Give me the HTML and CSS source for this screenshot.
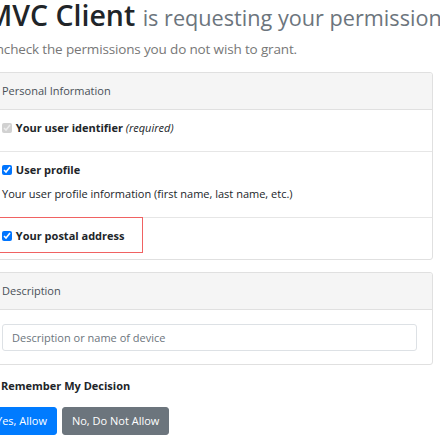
FILE: index.html
```
<!DOCTYPE html>
<html lang="en">
<head>
<meta charset="utf-8">
<title>Consent</title>
<link rel="stylesheet" href="styles.css">
</head>
<body>
<div class="page-consent">
  <div class="lead">
    <h1>MVC Client <small class="muted">is requesting your permission</small></h1>
    <p>Uncheck the permissions you do not wish to grant.</p>
  </div>

  <form class="consent-form">
    <div class="form-group">
      <div class="card">
        <div class="card-header">Personal Information</div>
        <ul class="list-group">
          <li class="list-item">
            <label class="scope"><input type="checkbox" class="check" checked disabled> <strong>Your user identifier</strong></label>
            <span class="req"><em>(required)</em></span>
          </li>
          <li class="list-item">
            <label class="scope"><input type="checkbox" class="check" checked> <strong>User profile</strong></label>
            <div class="consent-description"><label>Your user profile information (first name, last name, etc.)</label></div>
          </li>
          <li class="list-item highlighted">
            <label class="scope"><input type="checkbox" class="check" checked> <strong>Your postal address</strong></label>
            <span class="annotation"></span>
          </li>
        </ul>
      </div>
    </div>

    <div class="form-group">
      <div class="card">
        <div class="card-header">Description</div>
        <div class="card-body">
          <input class="form-control" type="text" placeholder="Description or name of device">
        </div>
      </div>
    </div>

    <div class="form-group">
      <div class="form-check">
        <input type="checkbox" class="check remember" checked>
        <label class="form-check-label"><strong>Remember My Decision</strong></label>
      </div>
    </div>

    <div class="buttons">
      <button type="button" class="btn btn-primary">Yes, Allow</button>
      <button type="button" class="btn btn-secondary">No, Do Not Allow</button>
    </div>
  </form>
</div>
</body>
</html>
```

FILE: styles.css
```
html, body {
  margin: 0;
  padding: 0;
  overflow: hidden;
  background: #ffffff;
}

body {
  font-family: "Open Sans", "Noto Sans", "Liberation Sans", sans-serif;
  font-size: 11px;
  line-height: 18px;
  color: #212529;
}

.page-consent {
  margin-left: -14px;
  width: 447px;
}

.lead h1 {
  margin: -3px 0 2px 0;
  font-size: 28.5px;
  line-height: 36px;
  font-weight: 600;
  white-space: nowrap;
  color: #212529;
}

.lead h1 .muted {
  font-size: 76%;
  font-weight: 400;
  color: #6c757d;
}

.lead p {
  margin: 0 0 12px 0;
  font-size: 13.5px;
  line-height: 22px;
  font-weight: 400;
  color: #777777;
  letter-spacing: -0.15px;
}

.form-group {
  margin-bottom: 12px;
}

.form-group.compact {
  margin-bottom: 11px;
}

.card {
  border: 1px solid #e0e0e0;
  border-radius: 3px;
  background: #fff;
}

.card-header {
  padding: 9px 15px;
  background: #f5f5f5;
  border-bottom: 1px solid #e0e0e0;
  color: #495057;
  border-radius: 3px 3px 0 0;
}

.list-group {
  list-style: none;
  margin: 0;
  padding: 0;
}

.list-item {
  position: relative;
  padding: 9px 15px 14px 15px;
  border-bottom: 1px solid #e6e6e6;
  line-height: 18px;
}

.list-item:last-child {
  border-bottom: none;
}

.scope {
  display: inline;
}

.consent-description {
  margin-top: 6px;
}

.req {
  font-style: italic;
}

.check {
  width: 10px;
  height: 10px;
  margin: 0 1px 0 0;
  vertical-align: -1px;
}

.annotation {
  position: absolute;
  left: 0;
  top: -1px;
  width: 154px;
  height: 34px;
  border: 1.5px solid #f06262;
}

.card-body {
  padding: 14px 15px 13px 15px;
}

.form-control {
  display: block;
  box-sizing: border-box;
  width: 100%;
  height: 27px;
  padding: 4px 9px;
  font-family: inherit;
  font-size: 11px;
  color: #495057;
  border: 1px solid #dde1e5;
  border-radius: 3px;
  outline: none;
}

.form-control::placeholder {
  color: #6c757d;
}

.form-check {
  position: relative;
  padding-left: 15px;
  line-height: 18px;
}

.form-check .remember {
  position: absolute;
  left: 0;
  top: 4px;
}

.form-check-label {
  display: block;
}

.buttons {
  display: flex;
  gap: 5px;
}

.btn {
  font-family: inherit;
  font-size: 11px;
  line-height: 18px;
  padding: 4px 9px;
  border: 1px solid transparent;
  border-radius: 3px;
  color: #fff;
}

.btn-primary {
  background: #007bff;
  border-color: #007bff;
}

.btn-secondary {
  background: #6c757d;
  border-color: #6c757d;
}
```
